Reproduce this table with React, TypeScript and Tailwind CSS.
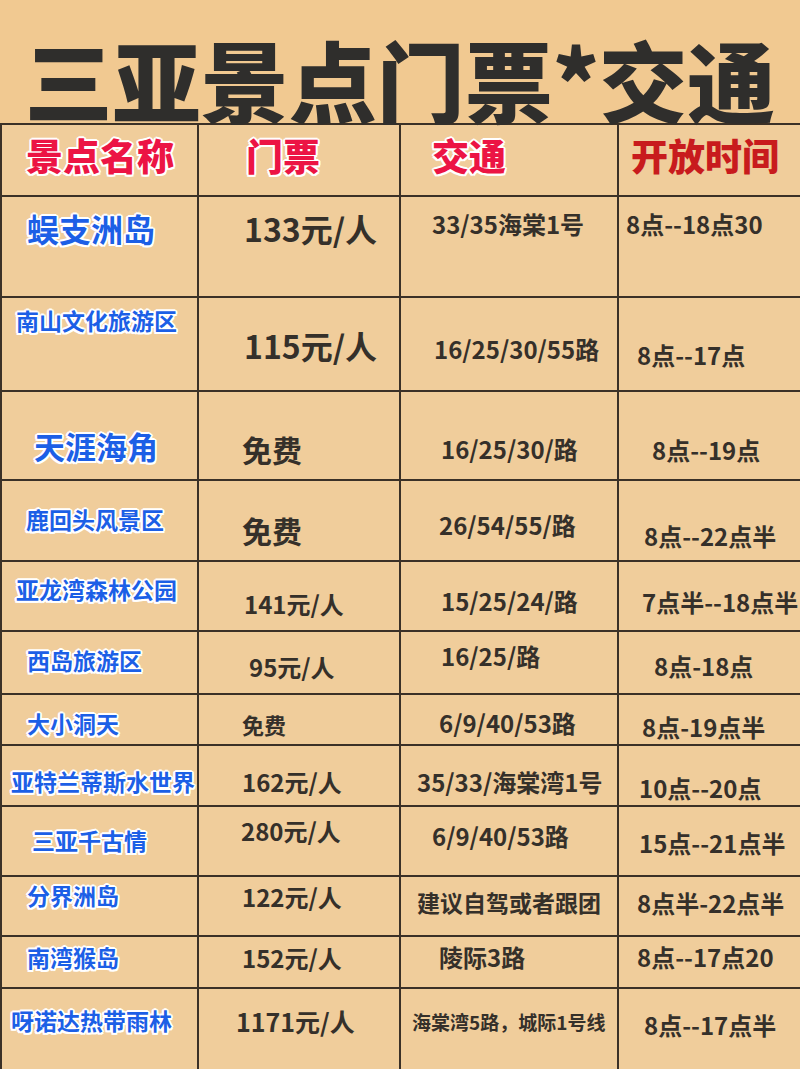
import React from "react";

type Cell = { t: string; c: string };
type Row = { h: string; cells: Cell[] };

const NAME = "text-[#1c5fe6] font-bold whitespace-nowrap leading-none [text-shadow:2px_0_0_#fff,-2px_0_0_#fff,0_2px_0_#fff,0_-2px_0_#fff,1.5px_1.5px_0_#fff,-1.5px_-1.5px_0_#fff,1.5px_-1.5px_0_#fff,-1.5px_1.5px_0_#fff]";
const VAL = "text-[#35302a] font-bold whitespace-nowrap leading-none";
const HEAD = "text-[37px] leading-none font-black whitespace-nowrap";
const OUTLINE = "[text-shadow:2px_0_0_#fff,-2px_0_0_#fff,0_2px_0_#fff,0_-2px_0_#fff,1.5px_1.5px_0_#fff,-1.5px_-1.5px_0_#fff,1.5px_-1.5px_0_#fff,-1.5px_1.5px_0_#fff]";

const rows: Row[] = [
  {
    h: "h-[101px]",
    cells: [
      { t: "蜈支洲岛", c: `${NAME} text-[32px] pl-[25px] pt-[15px]` },
      { t: "133元/人", c: `${VAL} text-[32px] pl-[45px] pt-[15px]` },
      { t: "33/35海棠1号", c: `${VAL} text-[24px] pl-[31px] pt-[15px]` },
      { t: "8点--18点30", c: `${VAL} text-[24px] pl-[7px] pt-[15px]` },
    ],
  },
  {
    h: "h-[94px]",
    cells: [
      { t: "南山文化旅游区", c: `${NAME} text-[23px] pl-[14px] pt-[11px]` },
      { t: "115元/人", c: `${VAL} text-[32px] pl-[45px] pt-[31px]` },
      { t: "16/25/30/55路", c: `${VAL} text-[24px] pl-[33px] pt-[39px]` },
      { t: "8点--17点", c: `${VAL} text-[24px] pl-[18px] pt-[45px]` },
    ],
  },
  {
    h: "h-[89px]",
    cells: [
      { t: "天涯海角", c: `${NAME} text-[31px] pl-[32px] pt-[38px]` },
      { t: "免费", c: `${VAL} text-[30px] pl-[43px] pt-[42px]` },
      { t: "16/25/30/路", c: `${VAL} text-[24px] pl-[40px] pt-[45px]` },
      { t: "8点--19点", c: `${VAL} text-[24px] pl-[33px] pt-[46px]` },
    ],
  },
  {
    h: "h-[81px]",
    cells: [
      { t: "鹿回头风景区", c: `${NAME} text-[23px] pl-[24px] pt-[27px]` },
      { t: "免费", c: `${VAL} text-[30px] pl-[43px] pt-[34px]` },
      { t: "26/54/55/路", c: `${VAL} text-[24px] pl-[38px] pt-[32px]` },
      { t: "8点--22点半", c: `${VAL} text-[24px] pl-[25px] pt-[43px]` },
    ],
  },
  {
    h: "h-[70px]",
    cells: [
      { t: "亚龙湾森林公园", c: `${NAME} text-[23px] pl-[14px] pt-[16px]` },
      { t: "141元/人", c: `${VAL} text-[24px] pl-[45px] pt-[30px]` },
      { t: "15/25/24/路", c: `${VAL} text-[24px] pl-[40px] pt-[27px]` },
      { t: "7点半--18点半", c: `${VAL} text-[24px] pl-[23px] pt-[28px]` },
    ],
  },
  {
    h: "h-[63px]",
    cells: [
      { t: "西岛旅游区", c: `${NAME} text-[23px] pl-[25px] pt-[17px]` },
      { t: "95元/人", c: `${VAL} text-[24px] pl-[50px] pt-[23px]` },
      { t: "16/25/路", c: `${VAL} text-[24px] pl-[40px] pt-[12px]` },
      { t: "8点-18点", c: `${VAL} text-[24px] pl-[35px] pt-[22px]` },
    ],
  },
  {
    h: "h-[51px]",
    cells: [
      { t: "大小洞天", c: `${NAME} text-[23px] pl-[25px] pt-[17px]` },
      { t: "免费", c: `${VAL} text-[22px] pl-[43px] pt-[18px]` },
      { t: "6/9/40/53路", c: `${VAL} text-[24px] pl-[38px] pt-[16px]` },
      { t: "8点-19点半", c: `${VAL} text-[24px] pl-[23px] pt-[20px]` },
    ],
  },
  {
    h: "h-[61px]",
    cells: [
      { t: "亚特兰蒂斯水世界", c: `${NAME} text-[23px] pl-[9px] pt-[24px]` },
      { t: "162元/人", c: `${VAL} text-[24px] pl-[43px] pt-[24px]` },
      { t: "35/33/海棠湾1号", c: `${VAL} text-[24px] pl-[16px] pt-[24px]` },
      { t: "10点--20点", c: `${VAL} text-[24px] pl-[20px] pt-[30px]` },
    ],
  },
  {
    h: "h-[70px]",
    cells: [
      { t: "三亚千古情", c: `${NAME} text-[23px] pl-[30px] pt-[22px]` },
      { t: "280元/人", c: `${VAL} text-[24px] pl-[42px] pt-[12px]` },
      { t: "6/9/40/53路", c: `${VAL} text-[24px] pl-[31px] pt-[17px]` },
      { t: "15点--21点半", c: `${VAL} text-[24px] pl-[20px] pt-[24px]` },
    ],
  },
  {
    h: "h-[60px]",
    cells: [
      { t: "分界洲岛", c: `${NAME} text-[23px] pl-[25px] pt-[7px]` },
      { t: "122元/人", c: `${VAL} text-[24px] pl-[43px] pt-[8px]` },
      { t: "建议自驾或者跟团", c: `${VAL} text-[23px] pl-[16px] pt-[14px]` },
      { t: "8点半-22点半", c: `${VAL} text-[24px] pl-[18px] pt-[14px]` },
    ],
  },
  {
    h: "h-[52px]",
    cells: [
      { t: "南湾猴岛", c: `${NAME} text-[23px] pl-[25px] pt-[9px]` },
      { t: "152元/人", c: `${VAL} text-[24px] pl-[43px] pt-[9px]` },
      { t: "陵际3路", c: `${VAL} text-[24px] pl-[38px] pt-[8px]` },
      { t: "8点--17点20", c: `${VAL} text-[24px] pl-[18px] pt-[8px]` },
    ],
  },
  {
    h: "h-[82px]",
    cells: [
      { t: "呀诺达热带雨林", c: `${NAME} text-[23px] pl-[9px] pt-[20px]` },
      { t: "1171元/人", c: `${VAL} text-[25px] pl-[37px] pt-[20px]` },
      { t: "海棠湾5路，城际1号线", c: `${VAL} text-[19px] pl-[11px] pt-[23px]` },
      { t: "8点--17点半", c: `${VAL} text-[24px] pl-[25px] pt-[24px]` },
    ],
  },
];

const colBorder = [
  "border-l-2 border-r-2 border-[#3b3127]",
  "border-r-2 border-[#3b3127]",
  "border-r-2 border-[#3b3127]",
  "",
];

export default function App() {
  return (
    <div
      className="w-[800px] h-[1069px] overflow-hidden bg-[#f1c991] flex flex-col"
      style={{ fontFamily: '"Noto Sans CJK SC", "Noto Sans", sans-serif' }}
    >
      <div className="relative z-10 mt-[34px] mb-[1px] h-[88px] text-center text-[88px] leading-none font-black text-[#2f2e2c] whitespace-nowrap">
        三亚景点门票*交通
      </div>
      <div className="flex-1 bg-[#f0cd9b] border-t-2 border-[#3b3127] flex flex-col">
        <div className="h-[72px] shrink-0 grid grid-cols-[199px_202px_218px_1fr] border-b-2 border-[#3b3127]">
          <div className={`${colBorder[0]} pl-[24px] pt-[12px]`}>
            <div className={`${HEAD} ${OUTLINE} text-[#ec1444]`}>景点名称</div>
          </div>
          <div className={`${colBorder[1]} pl-[47px] pt-[12px]`}>
            <div className={`${HEAD} ${OUTLINE} text-[#ec1444]`}>门票</div>
          </div>
          <div className={`${colBorder[2]} pl-[31px] pt-[12px]`}>
            <div className={`${HEAD} ${OUTLINE} text-[#ec1444]`}>交通</div>
          </div>
          <div className="pl-[12px] pt-[12px]">
            <div className={`${HEAD} text-[#c81b1d]`}>开放时间</div>
          </div>
        </div>
        {rows.map((r, i) => (
          <div
            key={i}
            className={`${r.h} shrink-0 grid grid-cols-[199px_202px_218px_1fr] ${i < rows.length - 1 ? "border-b-2 border-[#3b3127]" : ""}`}
          >
            {r.cells.map((cell, j) => (
              <div key={j} className={`${colBorder[j]} overflow-visible`}>
                <div className={cell.c}>{cell.t}</div>
              </div>
            ))}
          </div>
        ))}
      </div>
    </div>
  );
}
